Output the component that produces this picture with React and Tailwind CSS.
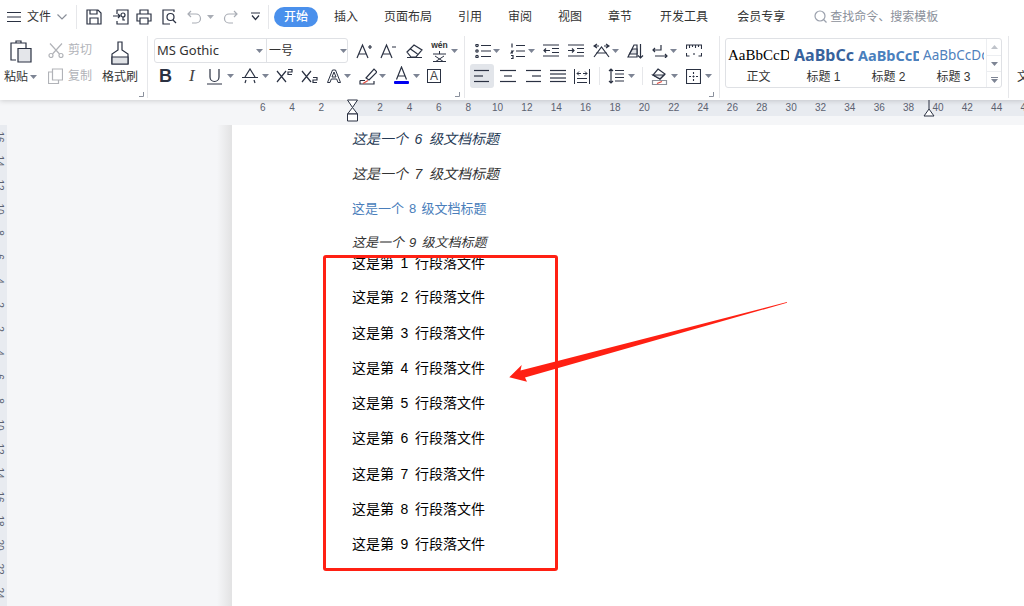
import React from "react";

const C = "#2a3142";
const Caret = ({ className = "", color = "#7d8494" }) => (
  <svg width="7" height="4" viewBox="0 0 7 4" className={`shrink-0 ${className}`}><path d="M0 0h7L3.5 4z" fill={color} /></svg>
);
const S = ({ w = 16, h = 16, className = "", children, stroke = C, sw = 1.2 }) => (
  <svg width={w} height={h} viewBox={`0 0 ${w} ${h}`} fill="none" stroke={stroke} strokeWidth={sw} className={`shrink-0 ${className}`}>{children}</svg>
);
const Corner = ({ className = "" }) => (
  <svg width="5" height="5" viewBox="0 0 5 5" className={`absolute ${className}`}><path d="M0 4.5h4.5V0" stroke="#8a909c" fill="none" /></svg>
);
const Lines = ({ className = "", rows }) => (
  <S w={16} h={14} className={className}>{rows.map((r, i) => <path key={i} d={`M${r[0]} ${r[2]}H${r[1]}`} />)}</S>
);
const Sep = ({ className }) => <div className={`shrink-0 w-px bg-[#e6e7ea] ${className}`} />;

const tabs = [
  ["插入", "ml-[16px]"], ["页面布局", "ml-[26px]"], ["引用", "ml-[26px]"], ["审阅", "ml-[26px]"],
  ["视图", "ml-[26px]"], ["章节", "ml-[26px]"], ["开发工具", "ml-[28px]"], ["会员专享", "ml-[29px]"],
];

function TopBar() {
  return (
    <div className="flex items-center h-[33px] text-[12px] text-[#333]">
      <S w={14} h={12} className="ml-[7px]" sw={1.1}><path d="M0 1.5h14M0 6h14M0 10.5h14" /></S>
      <span className="ml-[6px]">文件</span>
      <S w={10} h={6} className="ml-[6px]" stroke="#8a8f99"><path d="M.5.5 5 5 9.5.5" /></S>
      <Sep className="ml-[9px] h-[24px]" />
      <S w={16} h={16} className="ml-[9px]"><path d="M1 1h11l3 3v11H1zM4 1v4h7V1M4 15V9h8v6" /></S>
      <S w={16} h={16} className="ml-[11px]"><path d="M4 5V1h11v14H4v-3M0 7h7M5 5l2 2-2 2" /><circle cx="10" cy="6" r="2" /><path d="M10 8v3h2" /></S>
      <S w={16} h={16} className="ml-[7px]"><path d="M4 5V1h8v4M4 12H1V5h14v7h-3M4 9h8v6H4z" /></S>
      <S w={15} h={16} className="ml-[10px]"><path d="M12 3V1H1v14h7" /><circle cx="8.5" cy="8" r="3.5" /><path d="m11 11 3 3" /></S>
      <S w={15} h={14} className="ml-[10px]" stroke="#a9adb5"><path d="M4 1 1 4l3 3M1 4h8a4.5 4.5 0 0 1 0 9H5" /></S>
      <Caret className="ml-[5px]" color="#a9adb5" />
      <S w={15} h={14} className="ml-[9px]" stroke="#a9adb5"><path d="m11 1 3 3-3 3M14 4H6a4.5 4.5 0 0 0 0 9h4" /></S>
      <S w={9} h={9} className="ml-[13px]"><path d="M0 1h9M1 3.5 4.5 7.5 8 3.5" /></S>
      <Sep className="ml-[8px] h-[24px]" />
      <div className="ml-[5px] w-[44px] h-[20px] rounded-full bg-[#4a90ec] text-white flex items-center justify-center font-medium">开始</div>
      {tabs.map(([t, c]) => <span key={t} className={c}>{t}</span>)}
      <S w={13} h={13} className="ml-[29px]" stroke="#9ba1ad"><circle cx="6" cy="6" r="5" /><path d="m9.5 9.5 3 3" /></S>
      <span className="ml-[3px] text-[#8b909a]">查找命令、搜索模板</span>
    </div>
  );
}

function Clipboard() {
  return (
    <div className="relative w-[148px] shrink-0 h-[62px] mt-[3px] border-r border-[#e6e7ea]">
      <div className="flex h-[30px] items-start">
        <div className="w-[48px] shrink-0">
          <S w={22} h={24} className="ml-[10px] mt-[4px]"><path d="M6 20H1V3h15v5M6 3V1h5v2" /><path d="M8 8.5h13V22H8z" fill="#e4e6ea" /></S>
        </div>
        <div className="flex flex-col">
          <div className="flex items-center h-[24px] mt-[2px] text-[#b1b3b8] text-[12px]">
            <S w={16} h={15} stroke="#b1b3b8"><circle cx="3" cy="12.5" r="2" /><circle cx="13" cy="12.5" r="2" /><path d="M4.5 11 14 .5M11.5 11 2 .5" /></S>
            <span className="ml-[4px]">剪切</span>
          </div>
          <div className="flex items-center h-[24px] mt-[2px] text-[#b1b3b8] text-[12px]">
            <S w={15} h={16} stroke="#b1b3b8"><path d="M4.5 1h10v11h-10zM4.500 4H.5v11.500h10V12" /></S>
            <span className="ml-[5px]">复制</span>
          </div>
        </div>
        <div className="ml-[19px]">
          <S w={18} h={24} className="mt-[5px]"><path d="M7 1h4v8l6 4v10H1V13l6-4z" /><path d="M1 16h16v7H1z" fill="#dfe1e5" /></S>
        </div>
      </div>
      <div className="absolute left-[4px] top-[32px] flex items-center text-[12px] text-[#333] h-[18px]">
        <span>粘贴</span><Caret className="ml-[2px]" />
        <span className="ml-[65px]">格式刷</span>
      </div>
      <Corner className="left-[139px] top-[56px]" />
    </div>
  );
}

function FontGroup() {
  return (
    <div className="relative w-[317px] shrink-0 h-[62px] mt-[3px] border-r border-[#e6e7ea] pl-[6px]">
      <div className="flex items-center h-[25px] mt-[2px]">
        <div className="w-[194px] h-[25px] border border-[#dfe1e5] rounded-[3px] flex items-center text-[12px] text-[#333]">
          <span className="ml-[2px] w-[105px] text-[13px] [font-family:'Noto_Sans',sans-serif]">MS Gothic</span>
          <Caret />
          <div className="ml-[3px] w-px h-full bg-[#dfe1e5]" />
          <span className="ml-[2px] w-[24px] shrink-0 whitespace-nowrap">一号</span>
          <Caret className="ml-[47px]" />
        </div>
        <S w={17} h={16} className="ml-[8px]"><path d="M1 15 6.500 2 12 15M3 11h7M12 4h4M14 2v4" /></S>
        <S w={17} h={16} className="ml-[7px]"><path d="M1 15 6.500 2 12 15M3 11h7M12 4h4" /></S>
        <S w={17} h={14} className="ml-[9px]"><path d="m1 8 7-7 8 5-6 7H5zM4.500 5l7 5M1 13.500h15" /></S>
        <div className="ml-[8px] w-[17px] h-[22px] relative flex items-start justify-center">
          <span className="text-[8.500px] leading-[10px] font-bold text-[#333] [font-family:'Liberation_Sans',sans-serif]">wén</span>
          <S w={15} h={11} className="absolute left-[1px] top-[11px]" sw={1}><path d="M7.500 0v3M1 3h13M3 5l9 6M12 5l-9 6M1 10.500h13" /></S>
        </div>
        <Caret className="ml-[3px]" />
      </div>
      <div className="flex items-center h-[24px] mt-[1px]">
        <span className="ml-[5px] w-[13px] text-[18px] leading-[24px] font-bold text-[#2a3142] [font-family:'Liberation_Sans',sans-serif]">B</span>
        <span className="ml-[17px] w-[9px] text-[17px] leading-[24px] italic text-[#444] [font-family:'Liberation_Serif',serif]">I</span>
        <S w={15} h={17} className="ml-[9px]"><path d="M3 1v8a4.500 4.500 0 0 0 9 0V1M0 16h15" /></S>
        <Caret className="ml-[5px]" />
        <S w={16} h={16} className="ml-[8px]"><path d="M3 9 8 1l5 8M0 9.500h16M4 12l-1 3M12 12l1 3" /></S>
        <Caret className="ml-[4px]" />
        <S w={17} h={14} className="ml-[7px]"><path d="m1 2 9 11M10 2 1 13" /><path d="M12 .5h4v2.500h-4v2.500h4" /></S>
        <S w={17} h={14} className="ml-[8px]"><path d="m1 2 9 11M10 2 1 13" /><path d="M12 8.500h4V11h-4v2.500h4" /></S>
        <S w={14} h={14} className="ml-[9px]" sw={1}><path d="M.5 13.500 5.500 1h3l5 12.500h-2.500l-1.300-3.500H4.300L3 13.500zM5 8h4L7 3z" /></S>
        <Caret className="ml-[3px]" />
        <S w={18} h={18} className="ml-[8px]"><path d="m7 11 8-9 3 3-8 8zM1 13.500h5M1 13.500V17h14v-3" /><path d="m4 16.500 5-3" stroke="#e2483c" /></S>
        <Caret className="ml-[2px]" />
        <div className="ml-[8px] w-[15px] h-[20px] flex flex-col items-center">
          <S w={13} h={14}><path d="M1.500 13.500 6.500 1l5 12.500M3 10h7" /></S>
          <div className="w-[15px] h-[3px] mt-[1px] bg-[#0000f0] rounded-[1px]" />
        </div>
        <Caret className="ml-[4px]" />
        <div className="ml-[7px] w-[14px] h-[14px] border border-[#2a3142] flex items-center justify-center text-[12px] text-[#444] leading-none [font-family:'Liberation_Sans',sans-serif]">A</div>
      </div>
      <Corner className="left-[307px] top-[56px]" />
    </div>
  );
}

function ParaGroup() {
  return (
    <div className="relative w-[255px] shrink-0 h-[62px] mt-[3px] border-r border-[#e6e7ea] pl-[5px]">
      <div className="flex items-center h-[25px] mt-[2px]">
        <S w={16} h={14} className="ml-[5px]"><path d="M6 1.500h10M6 7h10M6 12.500h10" /><circle cx="2" cy="1.500" r="1.200" /><circle cx="2" cy="7" r="1.200" /><circle cx="2" cy="12.500" r="1.200" /></S>
        <Caret className="ml-[2px]" />
        <div className="ml-[10px] flex items-center">
          <S w={15} h={16}><path d="M6 2.500h9M6 8h9M6 13.500h9" /><path d="M2 .5v4M1 8h2L1 10h2M1 12.500h2v3H1" /></S>
        </div>
        <Caret className="ml-[3px]" />
        <S w={16} h={13} className="ml-[8px]"><path d="M0 1h16M9 4.500h7M9 8.500h7M0 12h16M7 6.500H1M3 4.500l-2 2 2 2" /></S>
        <S w={16} h={13} className="ml-[9px]"><path d="M0 1h16M9 4.500h7M9 8.500h7M0 12h16M0 6.500h6M4 4.500l2 2-2 2" /></S>
        <S w={17} h={15} className="ml-[9px]"><path d="M1 14 8.500 4 16 14M3 10h11M1 3h5M4 1 1 3l3 2M11 3h5M13 1l3 2-3 2" /></S>
        <Caret className="ml-[2px]" />
        <S w={17} h={16} className="ml-[8px]"><path d="m1 14 6-12h3v12zM13.500 1v14M11 12.500l2.500 2.500 2.500-2.500" /><path d="m2.500 11 3-5H10v5z" fill="#e0e2e6" /></S>
        <S w={16} h={14} className="ml-[8px]"><path d="M9 1v5H1M3 4 1 6l2 2M3 12h12M13 10l2 2-2 2" /></S>
        <Caret className="ml-[2px]" />
        <S w={16} h={13} className="ml-[9px]" sw={1.1}><path d="M.5 5V1h15v4M3.500 1v3M6.500 1v2M9.500 1v3M12.500 1v2M.5 9v3h3M12.500 12h3V9M8 9v2" /></S>
      </div>
      <div className="flex items-center h-[24px] mt-[1px]">
        <div className="w-[24px] h-[24px] rounded-[3px] bg-[#e2e5ea] flex items-center justify-center">
          <Lines rows={[[0, 15, 1.5], [0, 9, 7], [0, 15, 12.5]]} />
        </div>
        <Lines className="ml-[6px]" rows={[[0, 16, 1.5], [4, 12, 7], [0, 16, 12.5]]} />
        <Lines className="ml-[9px]" rows={[[1, 16, 1.5], [7, 16, 7], [1, 16, 12.5]]} />
        <Lines className="ml-[9px]" rows={[[0, 16, 1.5], [0, 16, 5], [0, 16, 9], [0, 16, 12.5]]} />
        <S w={16} h={15} className="ml-[8px]" sw={1}><path d="M.5 0v15M15.500 0v15M3 13.500h10M3 9.500h10M3 4.500h4M9 4.500h4M3 4.500l2-2M3 4.500l2 2M13 4.500l-2-2M13 4.500l-2 2" /></S>
        <Sep className="ml-[9px] h-[18px]" />
        <S w={16} h={16} className="ml-[8px]"><path d="M3 1v14M1 3l2-2 2 2M1 13l2 2 2-2M7 2.500h9M7 6h9M7 9.500h9M7 13h9" /></S>
        <Caret className="ml-[4px]" />
        <Sep className="ml-[7px] h-[18px]" />
        <S w={17} h={17} className="ml-[8px]"><path d="M7 1 14 6l-5 5-7-4z" /><path d="M2 7h11l-4 4z" fill="#dfe1e5" /><path d="M1.500 12.500h14v4h-14z" stroke="#8a8f99" /><path d="m6 15.500 5-2" stroke="#e2483c" /></S>
        <Caret className="ml-[3px]" />
        <S w={15} h={15} className="ml-[8px]" sw={1.1}><path d="M.5.5h14v14H.5zM7.500 3v2M7.500 6.500v2M7.500 10v2M3 7.500h2M6.500 7.500h2M10 7.500h2" /></S>
        <Caret className="ml-[4px]" />
      </div>
      <Corner className="left-[244px] top-[56px]" />
    </div>
  );
}

function Gallery() {
  const cells = [
    ["AaBbCcDd", "正文", "ml-[2px] w-[61px] text-[15px] text-black [font-family:'Liberation_Serif',serif]"],
    ["AaBbCcl", "标题 1", "ml-[3px] w-[60px] text-[16px] font-bold text-[#37629c] [font-family:'Noto_Sans',sans-serif]"],
    ["AaBbCcD", "标题 2", "ml-[2px] w-[61px] text-[14.500px] font-bold text-[#4a7fbd] [font-family:'Noto_Sans',sans-serif]"],
    ["AaBbCcDd", "标题 3", "ml-[2px] w-[61px] text-[13.500px] text-[#4f81bd] [font-family:'Noto_Sans',sans-serif]"],
  ];
  return (
    <div className="ml-[5px] mt-[5px] w-[277px] h-[50px] border border-[#dfe1e5] rounded-[3px] flex shrink-0">
      {cells.map(([a, b, c]) => (
        <div key={b} className="w-[65px] flex flex-col shrink-0">
          <div className={`h-[30px] leading-[32px] overflow-hidden whitespace-nowrap ${c}`}>{a}</div>
          <div className="text-center text-[12px] leading-[16px] text-[#333]">{b}</div>
        </div>
      ))}
      <div className="ml-auto w-[15px] border-l border-[#eceef1] flex flex-col">
        <div className="h-[16px] flex items-center justify-center"><Caret className="rotate-180" color="#bfc3ca" /></div>
        <div className="h-[17px] border-y border-[#eceef1] flex items-center justify-center"><Caret /></div>
        <div className="flex-1 flex flex-col items-center justify-center"><div className="w-[7px] h-px bg-[#7d8494] mb-[1px]" /><Caret /></div>
      </div>
    </div>
  );
}

function Ruler() {
  const nums = [6, 4, 2, "", 2, 4, 6, 8, 10, 12, 14, 16, 18, 20, 22, 24, 26, 28, 30, 32, 34, 36, 38, 40, 42, 44, 46];
  return (
    <div className="relative h-[16px] flex pl-[248px] overflow-hidden bg-[linear-gradient(to_right,#f5f6f8_352px,#e8ebf0_352px)]">
      {nums.map((n, i) => (
        <span key={i} className="w-[29.370px] shrink-0 text-center text-[10px] leading-[15px] text-[#5c6270] [font-family:'Liberation_Sans',sans-serif]">{n}</span>
      ))}
    </div>
  );
}

const docRows = [
  ["这是一个 6 级文档标题", "mt-[4px] text-[14px] [word-spacing:2.700px] italic text-[#263a55]"],
  ["这是一个 7 级文档标题", "mt-[15px] text-[14px] [word-spacing:2.700px] italic text-[#333]"],
  ["这是一个 8 级文档标题", "mt-[15px] text-[13px] [word-spacing:1.500px] text-[#4a7ebb]"],
  ["这是一个 9 级文档标题", "mt-[14px] text-[13px] [word-spacing:1.500px] italic text-[#333]"],
  ["这是第 1 行段落文件", "mt-[0px] text-[14px] [word-spacing:2.700px] text-black"],
  ["这是第 2 行段落文件", "mt-[14px] text-[14px] [word-spacing:2.700px] text-black"],
  ["这是第 3 行段落文件", "mt-[16px] text-[14px] [word-spacing:2.700px] text-black"],
  ["这是第 4 行段落文件", "mt-[15px] text-[14px] [word-spacing:2.700px] text-black"],
  ["这是第 5 行段落文件", "mt-[15px] text-[14px] [word-spacing:2.700px] text-black"],
  ["这是第 6 行段落文件", "mt-[15px] text-[14px] [word-spacing:2.700px] text-black"],
  ["这是第 7 行段落文件", "mt-[16px] text-[14px] [word-spacing:2.700px] text-black"],
  ["这是第 8 行段落文件", "mt-[15px] text-[14px] [word-spacing:2.700px] text-black"],
  ["这是第 9 行段落文件", "mt-[15px] text-[14px] [word-spacing:2.700px] text-black"],
];

export default function App() {
  return (
    <div className="relative w-[1024px] h-[606px] overflow-hidden bg-[#f5f6f8] [font-family:'Liberation_Sans','Noto_Sans_CJK_SC',sans-serif]">
      <div className="relative z-10 bg-white h-[100px] shadow-[0_1px_5px_rgba(0,0,0,0.16)]">
        <TopBar />
        <div className="flex">
          <Clipboard />
          <FontGroup />
          <ParaGroup />
          <Gallery />
          <Sep className="ml-[6px] mt-[3px] h-[62px]" />
          <span className="ml-[8px] mt-[36px] text-[12px] leading-[16px] text-[#333]">文</span>
        </div>
      </div>
      <Ruler />
      <div className="flex h-[490px] mt-[9px]">
        <div className="w-[7px] shrink-0 bg-[#e8ebf0] overflow-hidden flex flex-col">
          {[16, 14, 12, 10, 8, 6, 4, 2, 2, 4, 6, 8, 10, 12, 14, 16, 18, 20, 22, 24].map((n, i) => (
            <div key={i} className="h-[24px] shrink-0 w-[7px] flex items-center justify-center">
              <span className="block rotate-90 -translate-x-[5px] text-[10px] leading-none text-[#5c6270]">{n}</span>
            </div>
          ))}
        </div>
        <div className="w-[225px] shrink-0 bg-[linear-gradient(to_right,#f5f6f8_210px,#e2e2e3_225px)]" />
        <div className="flex-1 bg-white pl-[120px] flex flex-col">
          {docRows.map(([t, c]) => (
            <div key={t} className={`h-[20px] leading-[20px] shrink-0 whitespace-nowrap ${c}`}>{t}</div>
          ))}
        </div>
      </div>

      {/* ruler indent markers */}
      <svg width="14" height="24" viewBox="0 0 14 24" className="absolute left-[346px] top-[99px] z-20" fill="#fff" stroke={C} strokeWidth="1">
        <path d="M1.500 1h10L6.500 8.500z" /><path d="M6.500 8.500 1.500 15h10z" /><path d="M1.500 15h10v7h-10z" />
      </svg>
      <svg width="12" height="18" viewBox="0 0 12 18" className="absolute left-[923px] top-[100px] z-20" fill="#fff" stroke={C} strokeWidth="1">
        <path d="M6 0v9" /><path d="M1 16 6 9l5 7z" />
      </svg>

      {/* annotation overlay */}
      <div className="absolute left-[323px] top-[255px] w-[235px] h-[316px] border-[3px] border-[#ff2013] rounded-[3px] z-20" />
      <svg width="1024" height="606" viewBox="0 0 1024 606" className="absolute left-0 top-0 z-30 pointer-events-none">
        <polygon points="787,302 787,302.800 525,377.500 527,381.700 509.300,377.300 521.700,365 520.500,370.500" fill="#ff2013" />
      </svg>
    </div>
  );
}
